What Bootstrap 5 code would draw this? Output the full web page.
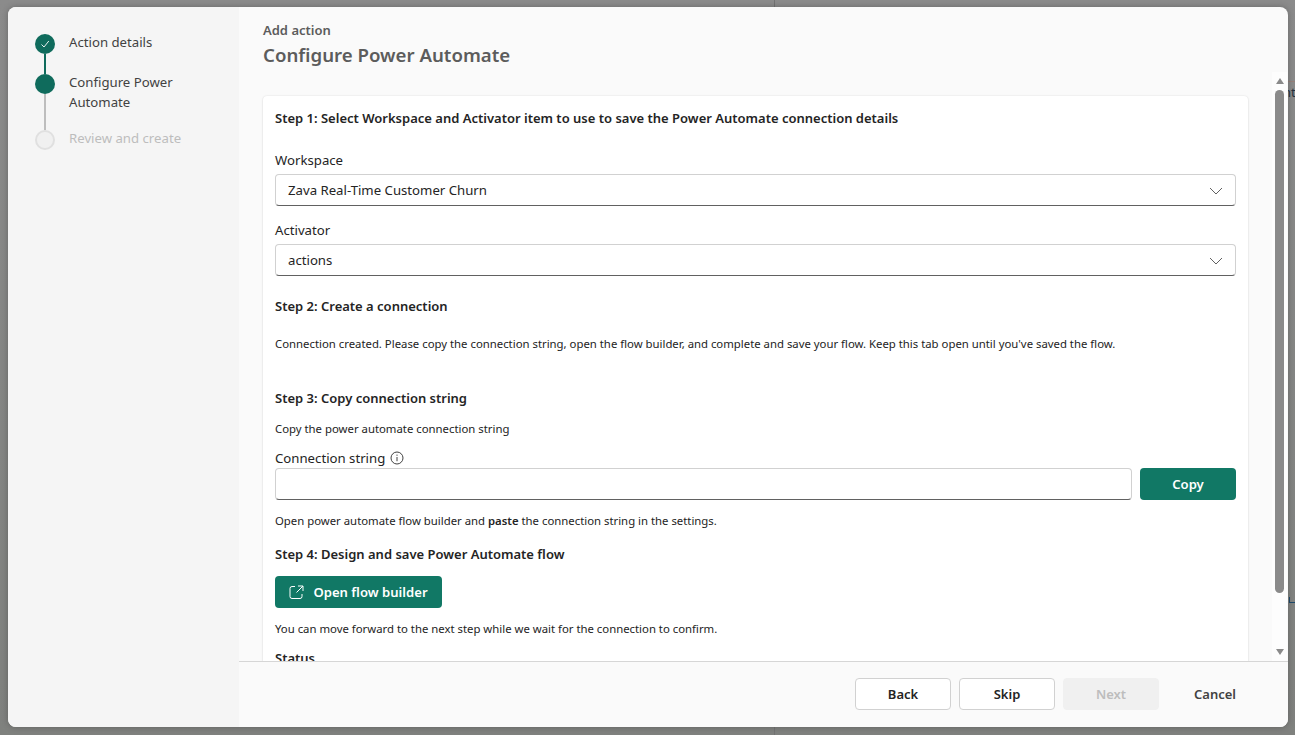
<!DOCTYPE html>
<html lang="en">
<head>
  <meta charset="UTF-8" />
  <title>Configure Power Automate</title>
  <link href="https://cdn.jsdelivr.net/npm/bootstrap@5.3.3/dist/css/bootstrap.min.css" rel="stylesheet"/>
  <style>
    html, body { height: 100%; overflow: hidden; }
    body { background: linear-gradient(180deg, #8b8b8b, #7f817e); font-family: "Noto Sans", "Open Sans", sans-serif; font-size: 13.2px; color: #242424; padding: 7px 7px 8px 8px; position: relative; }
    /* bits of the page behind the dialog */
    .bk-line { position: absolute; left: 774px; width: 1px; background: #737373; }
    .bk-top { top: 0; height: 7px; }
    .bk-bot { bottom: 0; height: 8px; }
    .bk-rule { position: absolute; left: 1288px; right: 0; top: 81px; height: 1px; background: #96807a; }
    .bk-txt { position: absolute; left: 1283px; top: 84px; font-size: 13px; line-height: 16px; color: #23313f; }
    .bk-mark { position: absolute; left: 1289px; top: 597px; width: 6px; height: 6px; border-left: 1px solid #1f4a6b; border-bottom: 1px solid #1f4a6b; }
    .dlg { height: 720px; background: #fafafa; border-radius: 8px; overflow: hidden; box-shadow: 0 0 6px rgba(0,0,0,.25); position: relative; }
    .side { width: 231px; background: #f5f5f5; padding: 25px 0 0 27px; flex: none; }
    .stp { display: flex; gap: 14px; }
    .stp-mark { width: 20px; flex: none; display: flex; flex-direction: column; align-items: center; padding-top: 2px; }
    .mark-a { height: 42px; margin-bottom: -2px; }
    .mark-b { height: 58px; margin-bottom: -2px; }
    .dot { width: 20px; height: 20px; border-radius: 50%; background: #0f6b5c; flex: none; display: flex; align-items: center; justify-content: center; }
    .dot.off { background: #f0f0f0; border: 2px solid #e0e0e0; }
    .ln { width: 2px; flex: 1; background: #0f6b5c; }
    .ln.off { background: #bdbdbd; }
    .stp-txt { font-size: 13.2px; line-height: 20px; color: #424242; }
    .stp-txt.off { color: #bdbdbd; }
    .body-wrap { min-width: 0; }
    .hd { padding: 14px 0 0 24px; height: 65px; flex: none; color: #5c5c5c; }
    .hd-sub { font-size: 13px; line-height: 19px; font-weight: 600; }
    .hd-title { font-size: 18.65px; line-height: 30px; font-weight: 600; }
    .scrollarea { position: relative; flex: 1; overflow: hidden; min-height: 0; padding: 24px 40px 0 24px; }
    .panel { background: #fff; border-radius: 4px; box-shadow: 0 0 2px rgba(0,0,0,.12), 0 1px 2px rgba(0,0,0,.08); padding: 12px; height: 640px; }
    .st-h { font-size: 13px; font-weight: 600; line-height: 20px; margin: 0; color: #242424; }
    .fld-lab { line-height: 20px; color: #242424; margin: 0 0 4px; }
    .dd { height: 32px; border: 1px solid #d1d1d1; border-bottom-color: #616161; border-radius: 4px; padding: 1px 12px 0; color: #242424; display: flex; align-items: center; justify-content: space-between; background: #fff; }
    .sm-t { font-size: 11.35px; line-height: 16px; color: #242424; margin: 0; }
    .sm-t b { font-weight: 600; }
    .txt-in { height: 32px; flex: 1; border: 1px solid #d1d1d1; border-bottom-color: #616161; border-radius: 4px; background: #fff; }
    .btn-teal { background: #117865; color: #fff; border: 0; border-radius: 4px; height: 32px; font-size: 13.1px; font-weight: 600; padding: 1px 0 0; display: flex; align-items: center; justify-content: center; }
    .btn-copy { width: 96px; flex: none; }
    .btn-open { width: 167px; gap: 9px; }
    .ico-info { margin-left: 1px; }
    .gap-lab1 { margin-top: 22px; }
    .gap-lab2 { margin-top: 14px; }
    .gap-st2 { margin-top: 20px; }
    .gap-conn { margin-top: 20px; }
    .gap-st3 { margin-top: 36px; }
    .gap-cp { margin-top: 13px; margin-bottom: -1px; }
    .gap-cs { margin-top: 12px; margin-bottom: 0; }
    .gap-t1 { margin-top: 13px; }
    .gap-st4 { margin-top: 15px; }
    .gap-btn { margin-top: 12px; }
    .gap-stat { margin-top: 11px; }
    .sb-track { position: absolute; right: 1px; top: 0; bottom: 0; width: 15px; background: #fdfdfd; }
    .sb-thumb { position: absolute; right: 4px; top: 18px; width: 9px; height: 503px; background: #8a8a8a; border-radius: 5px; }
    .sb-up, .sb-dn { position: absolute; right: 4px; width: 0; height: 0; border-left: 4.5px solid transparent; border-right: 4.5px solid transparent; }
    .sb-up { top: 6px; border-bottom: 6px solid #8a8a8a; }
    .sb-dn { bottom: 6px; border-top: 6px solid #8a8a8a; }
    .ft { height: 66px; flex: none; border-top: 1px solid #d6d6d6; padding: 16px 44px 0 0; gap: 8px; background: #fafafa; }
    .ft-btn { width: 96px; height: 32px; border: 1px solid #d1d1d1; border-radius: 4px; background: #fff; color: #242424; font-size: 13px; font-weight: 600; padding: 1px 0 0; }
    .ft-btn:disabled { background: #f0f0f0; border-color: #f0f0f0; color: #bdbdbd; opacity: 1; }
    .ft-cancel { background: transparent; border: 0; margin-left: 19px; width: 58px; text-align: center; color: #424242; }
  </style>
</head>
<body>
  <span class="bk-line bk-top"></span>
  <span class="bk-line bk-bot"></span>
  <span class="bk-rule"></span>
  <span class="bk-txt">nt</span>
  <span class="bk-mark"></span>
  <div class="dlg d-flex">
    <div class="side">
      <div class="stp">
        <div class="stp-mark mark-a">
          <span class="dot"><svg width="10" height="10" viewBox="0 0 10 10"><path d="M1.5 5.5 4 8 8.8 2" fill="none" stroke="#fff" stroke-width=".9"/></svg></span>
          <span class="ln"></span>
        </div>
        <div class="stp-txt">Action details</div>
      </div>
      <div class="stp">
        <div class="stp-mark mark-b">
          <span class="dot"></span>
          <span class="ln off"></span>
        </div>
        <div class="stp-txt">Configure Power<br>Automate</div>
      </div>
      <div class="stp">
        <div class="stp-mark"><span class="dot off"></span></div>
        <div class="stp-txt off">Review and create</div>
      </div>
    </div>
    <div class="body-wrap flex-grow-1 d-flex flex-column">
      <div class="hd">
        <div class="hd-sub">Add action</div>
        <div class="hd-title">Configure Power Automate</div>
      </div>
      <div class="scrollarea">
        <span class="sb-track"></span>
        <div class="panel position-relative">
          <p class="st-h">Step 1: Select Workspace and Activator item to use to save the Power Automate connection details</p>
          <p class="fld-lab gap-lab1">Workspace</p>
          <div class="dd"><span>Zava Real-Time Customer Churn</span><svg width="14" height="8" viewBox="0 0 14 8"><path d="M1 1l6 6 6-6" fill="none" stroke="#616161"/></svg></div>
          <p class="fld-lab gap-lab2">Activator</p>
          <div class="dd"><span>actions</span><svg width="14" height="8" viewBox="0 0 14 8"><path d="M1 1l6 6 6-6" fill="none" stroke="#616161"/></svg></div>
          <p class="st-h gap-st2">Step 2: Create a connection</p>
          <p class="sm-t gap-conn">Connection created. Please copy the connection string, open the flow builder, and complete and save your flow. Keep this tab open until you've saved the flow.</p>
          <p class="st-h gap-st3">Step 3: Copy connection string</p>
          <p class="sm-t gap-cp">Copy the power automate connection string</p>
          <p class="fld-lab d-flex align-items-center gap-1 gap-cs">Connection string <svg class="ico-info" width="14" height="14" viewBox="0 0 14 14"><circle cx="7" cy="7" r="6" fill="none" stroke="#424242"/><path d="M7 6v4.2M7 3.6v1.2" stroke="#424242" fill="none"/></svg></p>
          <div class="d-flex gap-2">
            <div class="txt-in"></div>
            <button class="btn-teal btn-copy">Copy</button>
          </div>
          <p class="sm-t gap-t1">Open power automate flow builder and <b>paste</b> the connection string in the settings.</p>
          <p class="st-h gap-st4">Step 4: Design and save Power Automate flow</p>
          <button class="btn-teal btn-open gap-btn">
            <svg width="15" height="15" viewBox="0 0 15 15"><path d="M6 1.5H3A2 2 0 0 0 1 3.5v8a2 2 0 0 0 2 2h8a2 2 0 0 0 2-2V9M9 1h5v5M14 1 7.5 7.5" fill="none" stroke="#fff"/></svg>
            Open flow builder
          </button>
          <p class="sm-t gap-t1">You can move forward to the next step while we wait for the connection to confirm.</p>
          <p class="st-h gap-stat">Status</p>
        </div>
        <span class="sb-up"></span>
        <span class="sb-thumb"></span>
        <span class="sb-dn"></span>
      </div>
      <div class="ft d-flex justify-content-end">
        <button class="ft-btn">Back</button>
        <button class="ft-btn">Skip</button>
        <button class="ft-btn" disabled>Next</button>
        <button class="ft-btn ft-cancel">Cancel</button>
      </div>
    </div>
  </div>
  <script src="https://cdn.jsdelivr.net/npm/bootstrap@5.3.3/dist/js/bootstrap.bundle.min.js"></script>
</body>
</html>
